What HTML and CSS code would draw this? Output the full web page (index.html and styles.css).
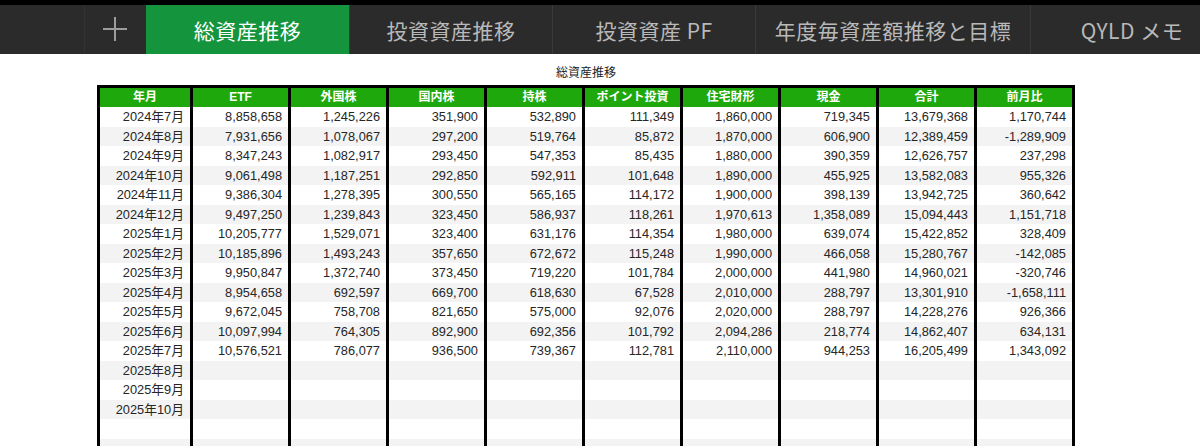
FILE: index.html
```html
<!DOCTYPE html>
<html lang="ja">
<head>
<meta charset="utf-8">
<title>総資産推移</title>
<link rel="stylesheet" href="styles.css">
</head>
<body>
<nav class="tabbar">
  <div class="tab-lead"></div>
  <div class="tab-add">
    <svg width="26" height="26" viewBox="0 0 26 26"><path d="M13 1V25M1 13H25" stroke="#9c9c9c" stroke-width="2" fill="none"/></svg>
  </div>
  <div class="tab active">総資産推移</div>
  <div class="tab">投資資産推移</div>
  <div class="tab">投資資産 PF</div>
  <div class="tab wide">年度毎資産額推移と目標</div>
  <div class="tab">QYLD メモ</div>
</nav>
<main class="sheet">
  <div class="title">総資産推移</div>
  <table class="grid">
    <colgroup>
      <col class="col-month"><col><col><col><col><col><col><col><col><col>
    </colgroup>
    <thead>
      <tr><th>年月</th><th>ETF</th><th>外国株</th><th>国内株</th><th>持株</th><th>ポイント投資</th><th>住宅財形</th><th>現金</th><th>合計</th><th>前月比</th></tr>
    </thead>
    <tbody>
      <tr><td>2024年7月</td><td>8,858,658</td><td>1,245,226</td><td>351,900</td><td>532,890</td><td>111,349</td><td>1,860,000</td><td>719,345</td><td>13,679,368</td><td>1,170,744</td></tr>
      <tr><td>2024年8月</td><td>7,931,656</td><td>1,078,067</td><td>297,200</td><td>519,764</td><td>85,872</td><td>1,870,000</td><td>606,900</td><td>12,389,459</td><td>-1,289,909</td></tr>
      <tr><td>2024年9月</td><td>8,347,243</td><td>1,082,917</td><td>293,450</td><td>547,353</td><td>85,435</td><td>1,880,000</td><td>390,359</td><td>12,626,757</td><td>237,298</td></tr>
      <tr><td>2024年10月</td><td>9,061,498</td><td>1,187,251</td><td>292,850</td><td>592,911</td><td>101,648</td><td>1,890,000</td><td>455,925</td><td>13,582,083</td><td>955,326</td></tr>
      <tr><td>2024年11月</td><td>9,386,304</td><td>1,278,395</td><td>300,550</td><td>565,165</td><td>114,172</td><td>1,900,000</td><td>398,139</td><td>13,942,725</td><td>360,642</td></tr>
      <tr><td>2024年12月</td><td>9,497,250</td><td>1,239,843</td><td>323,450</td><td>586,937</td><td>118,261</td><td>1,970,613</td><td>1,358,089</td><td>15,094,443</td><td>1,151,718</td></tr>
      <tr><td>2025年1月</td><td>10,205,777</td><td>1,529,071</td><td>323,400</td><td>631,176</td><td>114,354</td><td>1,980,000</td><td>639,074</td><td>15,422,852</td><td>328,409</td></tr>
      <tr><td>2025年2月</td><td>10,185,896</td><td>1,493,243</td><td>357,650</td><td>672,672</td><td>115,248</td><td>1,990,000</td><td>466,058</td><td>15,280,767</td><td>-142,085</td></tr>
      <tr><td>2025年3月</td><td>9,950,847</td><td>1,372,740</td><td>373,450</td><td>719,220</td><td>101,784</td><td>2,000,000</td><td>441,980</td><td>14,960,021</td><td>-320,746</td></tr>
      <tr><td>2025年4月</td><td>8,954,658</td><td>692,597</td><td>669,700</td><td>618,630</td><td>67,528</td><td>2,010,000</td><td>288,797</td><td>13,301,910</td><td>-1,658,111</td></tr>
      <tr><td>2025年5月</td><td>9,672,045</td><td>758,708</td><td>821,650</td><td>575,000</td><td>92,076</td><td>2,020,000</td><td>288,797</td><td>14,228,276</td><td>926,366</td></tr>
      <tr><td>2025年6月</td><td>10,097,994</td><td>764,305</td><td>892,900</td><td>692,356</td><td>101,792</td><td>2,094,286</td><td>218,774</td><td>14,862,407</td><td>634,131</td></tr>
      <tr><td>2025年7月</td><td>10,576,521</td><td>786,077</td><td>936,500</td><td>739,367</td><td>112,781</td><td>2,110,000</td><td>944,253</td><td>16,205,499</td><td>1,343,092</td></tr>
      <tr><td>2025年8月</td><td></td><td></td><td></td><td></td><td></td><td></td><td></td><td></td><td></td></tr>
      <tr><td>2025年9月</td><td></td><td></td><td></td><td></td><td></td><td></td><td></td><td></td><td></td></tr>
      <tr><td>2025年10月</td><td></td><td></td><td></td><td></td><td></td><td></td><td></td><td></td><td></td></tr>
      <tr><td></td><td></td><td></td><td></td><td></td><td></td><td></td><td></td><td></td><td></td></tr>
      <tr><td></td><td></td><td></td><td></td><td></td><td></td><td></td><td></td><td></td><td></td></tr>
    </tbody>
  </table>
</main>
</body>
</html>
```

FILE: styles.css
```css
html, body {
  margin: 0;
  padding: 0;
  background: #ffffff;
  overflow: hidden;
}
body {
  font-family: "Liberation Sans", "Noto Sans CJK JP", sans-serif;
  color: #222222;
}
.tabbar {
  display: flex;
  height: 49px;
  border-top: 5px solid #000000;
  background: #2b2b2b;
  overflow: hidden;
  white-space: nowrap;
}
.tab-lead {
  width: 84px;
  flex: none;
  border-right: 1px solid #333333;
}
.tab-add {
  width: 61px;
  flex: none;
  display: flex;
  align-items: center;
  justify-content: center;
}
.tab-add svg {
  margin-left: -2px;
  margin-top: -2px;
}
.tab {
  flex: none;
  width: 202px;
  display: flex;
  align-items: center;
  justify-content: center;
  font-family: "Noto Sans CJK JP", sans-serif;
  font-size: 21px;
  color: #b9b9b9;
  border-left: 1px solid #3a3a3a;
  letter-spacing: 0.5px;
}
.tab.active {
  background: #14943c;
  color: #ffffff;
  border-left: none;
  width: 203px;
}
.tab.wide {
  width: 274px;
}
.sheet {
  padding: 9px 0 0 97px;
  width: 978px;
}
.title {
  text-align: center;
  font-family: "Noto Sans CJK JP", sans-serif;
  font-size: 12px;
  line-height: 17px;
  height: 22px;
  color: #222222;
}
.grid {
  width: 978px;
  table-layout: fixed;
  border-collapse: collapse;
  border: 3px solid #000000;
}
.col-month {
  width: 93px;
}
.grid th {
  background: #1fa80c;
  color: #ffffff;
  font-family: "Liberation Sans", "Noto Sans CJK JP", sans-serif;
  font-weight: bold;
  font-size: 12px;
  height: 19px;
  padding: 0;
  border-left: 3px solid #000000;
  border-right: 3px solid #000000;
  border-bottom: none;
  text-align: center;
  line-height: 19px;
}
.grid td {
  height: 19.5px;
  padding: 0 6px 0 0;
  font-size: 12.8px;
  line-height: 19px;
  text-align: right;
  color: #262626;
  border-left: 3px solid #000000;
  border-right: 3px solid #000000;
  white-space: nowrap;
  overflow: hidden;
}
.grid tbody tr:nth-child(even) td {
  background: #f3f3f3;
}
```
